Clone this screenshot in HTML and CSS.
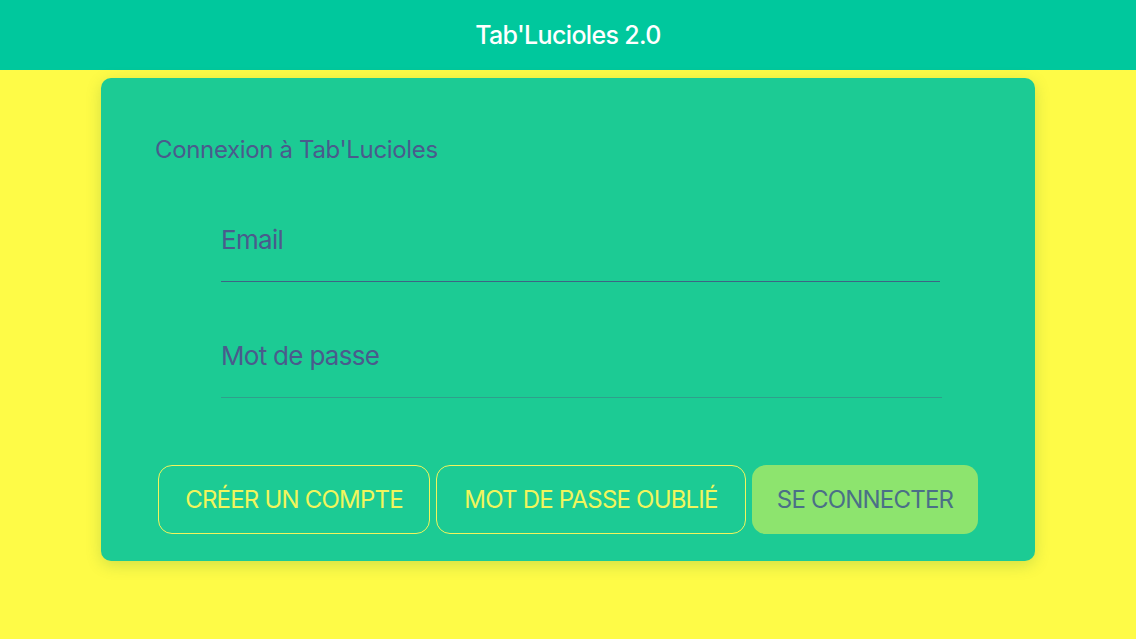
FILE: index.html
```html
<!DOCTYPE html>
<html lang="fr">
<head>
<meta charset="utf-8">
<title>Tab'Lucioles 2.0</title>
<link rel="stylesheet" href="styles.css">
</head>
<body>
<header class="topbar">
  <h1 class="topbar-title">Tab'Lucioles 2.0</h1>
</header>
<main class="page">
  <section class="card">
    <h2 class="card-title">Connexion à Tab'Lucioles</h2>
    <div class="fields">
      <label class="field field-email"><span class="field-label">Email</span></label>
      <label class="field field-pass"><span class="field-label">Mot de passe</span></label>
    </div>
    <div class="actions">
      <button class="btn btn-outline btn-create">CRÉER UN COMPTE</button>
      <button class="btn btn-outline btn-forgot">MOT DE PASSE OUBLIÉ</button>
      <button class="btn btn-fill">SE CONNECTER</button>
    </div>
  </section>
</main>
</body>
</html>
```
FILE: styles.css
```css
html, body {
  margin: 0;
  padding: 0;
}
body {
  width: 1136px;
  height: 639px;
  background: #fefb47;
  font-family: Inter, Roboto, "Liberation Sans", sans-serif;
  overflow: hidden;
}
.topbar {
  height: 70px;
  background: #00c89d;
  display: flex;
  align-items: center;
  justify-content: center;
}
.topbar-title {
  margin: 0;
  color: #ffffff;
  font-size: 25px;
  line-height: 30px;
  font-weight: 500;
  letter-spacing: -0.65px;
}
.page {
  display: flex;
  justify-content: center;
  padding-top: 8px;
}
.card {
  width: 934px;
  box-sizing: border-box;
  background: #1ccb94;
  border-radius: 10px;
  box-shadow: 0 4px 16px rgba(0, 100, 60, 0.18);
  padding: 59px 0 27px 54px;
}
.card-title {
  margin: 0;
  font-size: 24px;
  line-height: 26px;
  font-weight: 400;
  color: #4a5b8c;
  letter-spacing: -0.35px;
}
.fields {
  display: flex;
  flex-direction: column;
  padding-left: 66px;
  gap: 59px;
  margin-top: 62px;
}
.field {
  display: block;
  padding-bottom: 26px;
  border-bottom: 1px solid #3d6585;
}
.field-email {
  width: 719px;
}
.field-pass {
  width: 721px;
  border-bottom-color: #2f9f8c;
}
.field-label {
  display: block;
  font-size: 26px;
  line-height: 30px;
  color: #4a5b8c;
  letter-spacing: -0.7px;
}
.actions {
  display: flex;
  gap: 6px;
  margin-top: 67px;
  padding-left: 3px;
}
.btn {
  height: 69px;
  box-sizing: border-box;
  border-radius: 14px;
  font-family: inherit;
  font-size: 24px;
  font-weight: 400;
  letter-spacing: -0.8px;
  padding: 0;
  cursor: pointer;
}
.btn-outline {
  background: transparent;
  border: 1.5px solid #f1f55c;
  color: #f1f55c;
}
.btn-create { width: 272px; }
.btn-forgot { width: 310px; }
.btn-fill {
  width: 226px;
  background: #8de46e;
  border: none;
  color: #4b6f87;
}
```
